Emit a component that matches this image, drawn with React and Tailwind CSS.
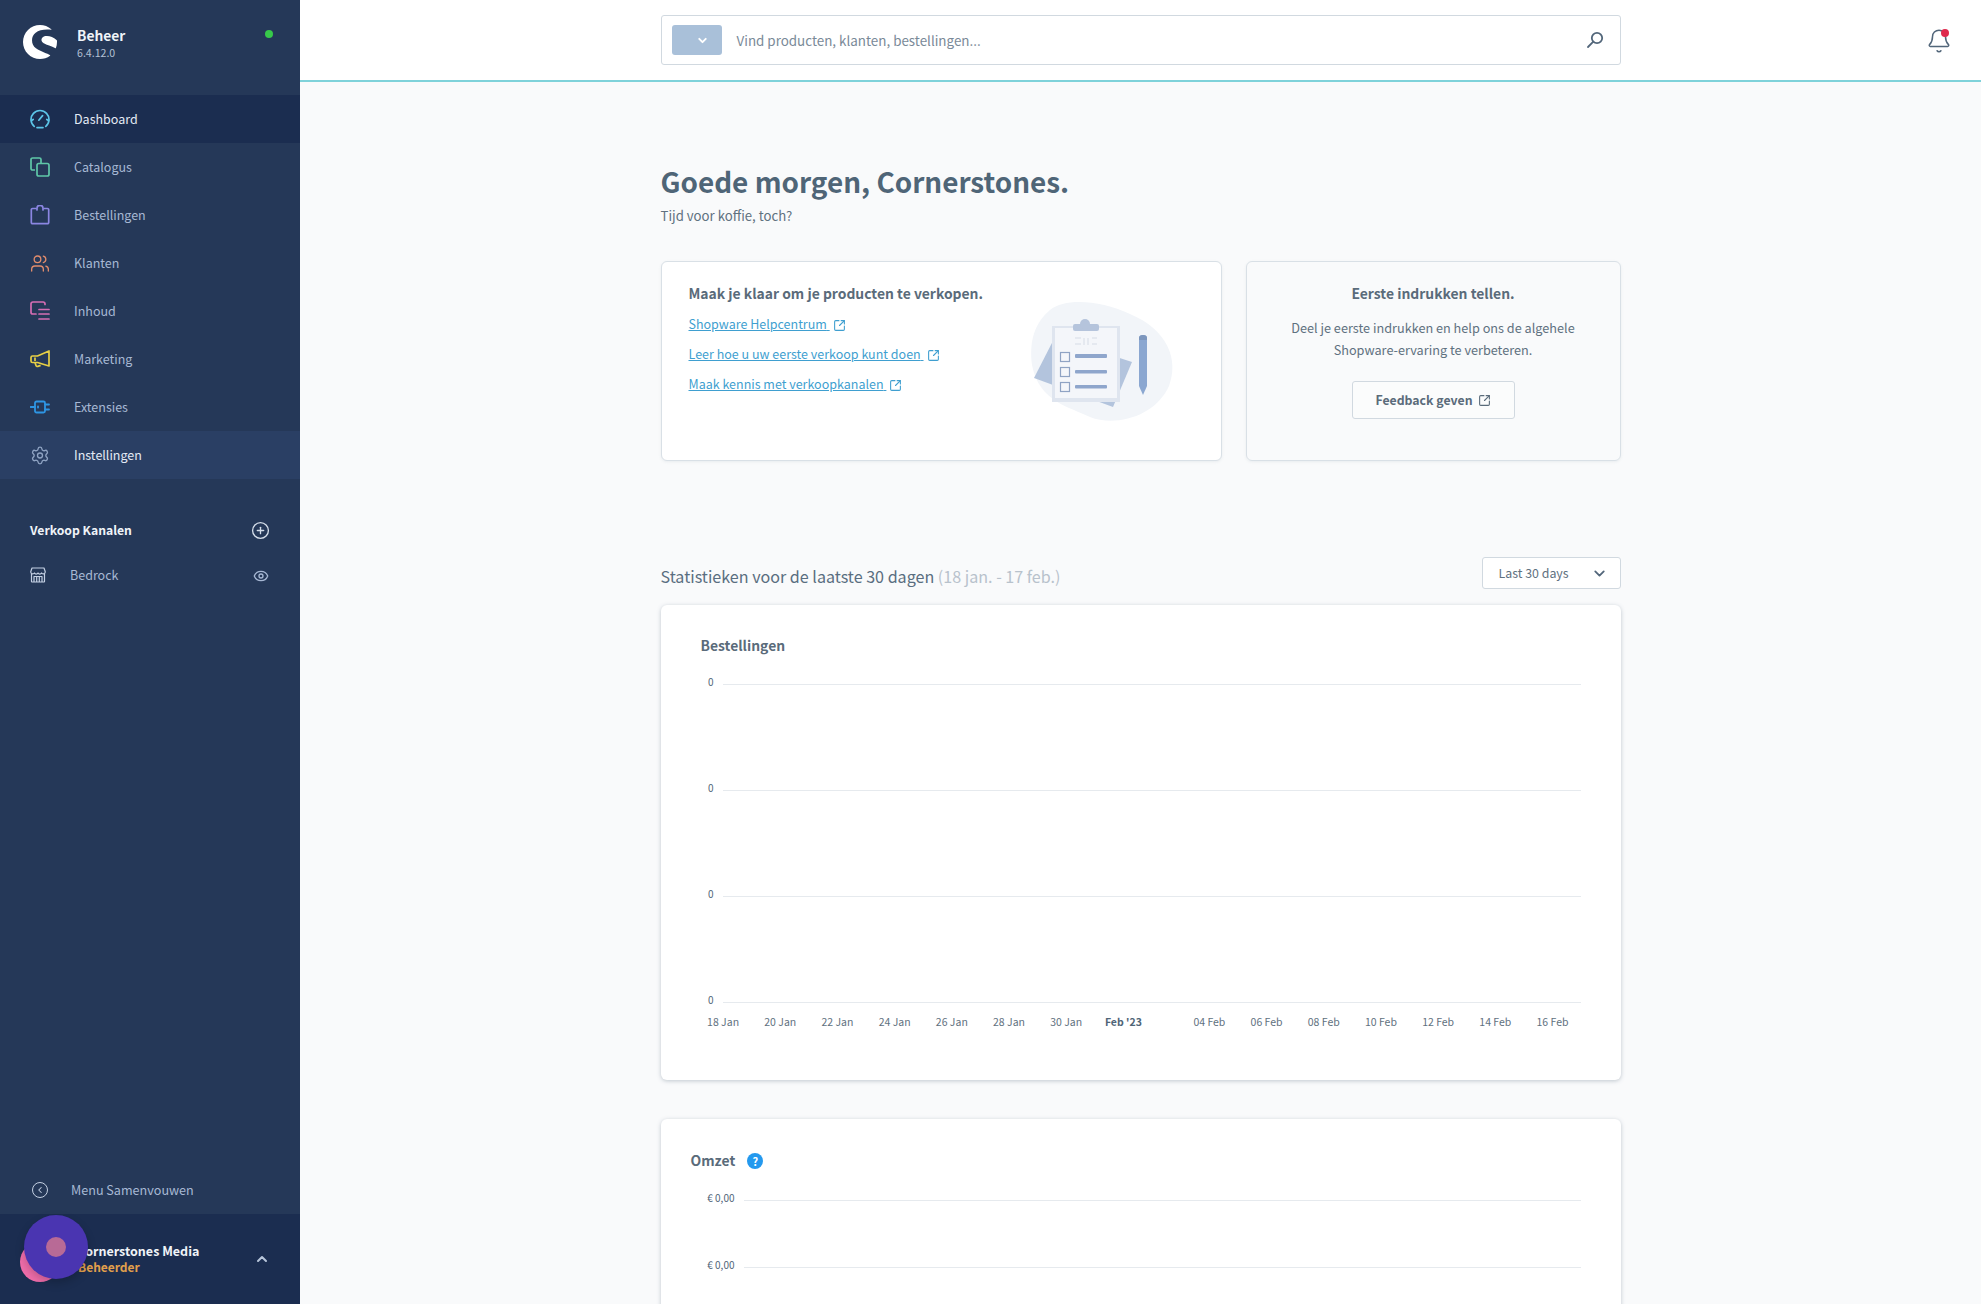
import React from 'react'
import { SiShopware } from 'react-icons/si'
import { Bell, ChevronDown, ChevronLeft, ChevronUp, CirclePlus, Eye, Settings, SquareArrowOutUpRight, Users } from 'lucide-react'

const GaugeIcon = () => (
  <svg viewBox="0 0 20 20" className="w-5 h-5" fill="none" stroke="#5cc5e8" strokeWidth="1.7" strokeLinecap="round">
    <path d="M4.200 17.400A9 9 0 1 1 15.800 17.400" />
    <path d="M7 18.600h6" />
    <path d="M8.800 11.200 12.600 6.600" />
    <path d="M1.600 11.500l1.600-1M18.400 11.500l-1.600-1" />
  </svg>
)

const CatalogIcon = () => (
  <svg viewBox="0 0 20 20" className="w-5 h-5" fill="none" stroke="#5fc7a8" strokeWidth="1.7">
    <path d="M5 13H2.600A1.600 1.600 0 0 1 1 11.400V2.600A1.600 1.600 0 0 1 2.600 1h6.800A1.600 1.600 0 0 1 11 2.600V6" />
    <rect x="7" y="6.500" width="12" height="12.500" rx="1.800" />
  </svg>
)

const BagIcon = () => (
  <svg viewBox="0 0 20 20" className="w-5 h-5" fill="none" stroke="#8b86e2" strokeWidth="1.7" strokeLinecap="round">
    <path d="M6 3.500H2.500A1.200 1.200 0 0 0 1.300 4.700V17.500A1.200 1.200 0 0 0 2.500 18.700H17.500A1.200 1.200 0 0 0 18.700 17.500V4.700A1.200 1.200 0 0 0 17.500 3.500H14" />
    <path d="M7 5V3.300a3 3 0 0 1 6 0V5" />
  </svg>
)

const ContentIcon = () => (
  <svg viewBox="0 0 20 20" className="w-5 h-5" fill="none" stroke="#d56db3" strokeWidth="1.7" strokeLinecap="round">
    <path d="M15 3.500V2.800A1.800 1.800 0 0 0 13.200 1H2.800A1.800 1.800 0 0 0 1 2.800V11.200A1.800 1.800 0 0 0 2.800 13H6" />
    <path d="M9 8.500h10M9 13h10M9 18h10" />
  </svg>
)

const MarketingIcon = () => (
  <svg viewBox="0 0 20 20" className="w-5 h-5" fill="none" stroke="#e7cf45" strokeWidth="1.700" strokeLinejoin="round">
    <path d="M19 2v15L7.500 13.500H2.500A1.500 1.500 0 0 1 1 12V8.500A1.500 1.500 0 0 1 2.500 7H7.500z" />
    <path d="M5 13.500l1 3a1.400 1.400 0 0 0 1.800.900l2.800-1" />
    <path d="M5 8.500v3.500" />
  </svg>
)

const ExtensionIcon = () => (
  <svg viewBox="0 0 20 20" className="w-5 h-5" fill="none" stroke="#2e95e3" strokeWidth="1.800" strokeLinecap="round">
    <rect x="5" y="4.500" width="10" height="11" rx="1.500" />
    <path d="M0.500 10H5M15 7.500h4M15 12.500h4" />
    <path d="M8 9.500v1" />
  </svg>
)

const StoreIcon = () => (
  <svg viewBox="0 0 16 16" className="w-4 h-4" fill="none" stroke="#c4d0e3" strokeWidth="1.200" strokeLinejoin="round">
    <path d="M1.500 6.500V14.500A.500.500 0 0 0 2 15H14A.500.500 0 0 0 14.500 14.500V6.500" />
    <path d="M2 1H14L15.200 4.500A2 2 0 0 1 11.600 6 2 2 0 0 1 8 6 2 2 0 0 1 4.400 6 2 2 0 0 1 .800 4.500z" />
    <path d="M4 15V9.500H12V15M6.700 9.500V15M9.300 9.500V15" />
  </svg>
)

const SearchGlass = () => (
  <svg viewBox="0 0 18 18" className="w-[18px] h-[18px] ml-auto" fill="none" stroke="#52667a" strokeWidth="1.800" strokeLinecap="round">
    <circle cx="11" cy="7" r="5.200" />
    <path d="M7.300 10.700 2 16" />
  </svg>
)

const NavItem = ({ icon, label, variant }) => {
  const rowClass =
    variant === 'active'
      ? 'bg-[#1b2d50] text-[#e3eaf4]'
      : variant === 'hover'
        ? 'bg-[#2a3f64] text-[#e3eaf4]'
        : 'text-[#a7b8d4]'
  return (
    <div className={`h-12 flex items-center pl-[30px] ${rowClass}`}>
      <span className="w-5 h-5 flex items-center justify-center">{icon}</span>
      <span className="ml-6 text-[12.5px] leading-5">{label}</span>
    </div>
  )
}

const HelpLink = ({ children }) => (
  <a className="flex items-center gap-[3px] h-[30px] text-[12.5px] leading-5 text-[#3f9fd0]">
    <span className="underline whitespace-pre">{children} </span>
    <SquareArrowOutUpRight size={13} strokeWidth={2} className="mt-[2px]" />
  </a>
)

const Clipboard = () => (
  <svg viewBox="0 0 200 140" className="w-[200px] h-[140px] shrink-0">
    <path d="M50 20C65 8 100 10 130 24C168 40 179 70 169 96C155 127 115 137 90 127C70 117 39 112 32 75C29 50 35 33 50 20Z" fill="#f2f5f9" />
    <polygon points="55,47 132,72 113,117 34,88" fill="#b3c4dd" />
    <rect x="52" y="36" width="68" height="76" fill="#dfe5ef" />
    <rect x="55" y="38" width="62" height="70" fill="#f4f6fa" />
    <rect x="73" y="34" width="26" height="7" rx="2" fill="#b5c4dc" />
    <circle cx="85" cy="34" r="5" fill="#b5c4dc" />
    <g fill="none" stroke="#e0e5ed" strokeWidth="1.500">
      <path d="M75 48h6M75 54h6M84 48v7M88 48v7M92 48h5M92 54h5" />
    </g>
    <g fill="none" stroke="#8fa3c4" strokeWidth="1.200">
      <rect x="60.500" y="62.500" width="9" height="9" />
      <rect x="60.500" y="77.500" width="9" height="9" />
      <rect x="60.500" y="92.500" width="9" height="9" />
    </g>
    <g fill="#8fa6cc">
      <rect x="75" y="64" width="32" height="4" rx="1" />
      <rect x="75" y="80" width="32" height="3.500" rx="1" />
      <rect x="75" y="95" width="32" height="3.500" rx="1" />
    </g>
    <path d="M139 48A4 3 0 0 1 147 48V96L143 105 139 96Z" fill="#8ba7d1" />
    <path d="M139 48A4 3 0 0 1 147 48V50H139Z" fill="#7d96bd" />
  </svg>
)

const xLabels = ['18 Jan', '20 Jan', '22 Jan', '24 Jan', '26 Jan', '28 Jan', '30 Jan', "Feb '23", '', '04 Feb', '06 Feb', '08 Feb', '10 Feb', '12 Feb', '14 Feb', '16 Feb']

const ChartRow = ({ label, height, labelWidth }) => (
  <div className={`flex items-start ${height}`}>
    <span className={`${labelWidth} shrink-0 text-right text-[10px] leading-[14px] text-[#52667a]`}>{label}</span>
    <span className="ml-[9px] flex-1 h-px mt-[9px] bg-[#e6eaee]" />
  </div>
)

export default function App() {
  return (
    <div className="flex h-[1304px] overflow-hidden bg-[#f9fafb] font-['Noto_Sans_CJK_SC',sans-serif] text-[#52667a]">
      {/* sidebar */}
      <aside className="relative w-[300px] shrink-0 h-full flex flex-col bg-[#253858]">
        <div className="h-[95px] flex items-start pl-[23px] pr-[27px] pt-[25px] shrink-0">
          <SiShopware size={34} color="#ffffff" />
          <div className="ml-[20px] flex-1">
            <div className="text-[13.8px] leading-[20px] font-semibold text-[#f0f4f8]">Beheer</div>
            <div className="mt-px text-[10.6px] leading-[14px] text-[#b3c0d4]">6.4.12.0</div>
          </div>
          <span className="w-2 h-2 mt-[5px] rounded-full bg-[#37c94a]" />
        </div>

        <nav>
          <NavItem icon={<GaugeIcon />} label="Dashboard" variant="active" />
          <NavItem icon={<CatalogIcon />} label="Catalogus" />
          <NavItem icon={<BagIcon />} label="Bestellingen" />
          <NavItem icon={<Users size={23} color="#e08c6c" strokeWidth={1.6} />} label="Klanten" />
          <NavItem icon={<ContentIcon />} label="Inhoud" />
          <NavItem icon={<MarketingIcon />} label="Marketing" />
          <NavItem icon={<ExtensionIcon />} label="Extensies" />
          <NavItem icon={<Settings size={23} color="#8ea2c2" strokeWidth={1.6} />} label="Instellingen" variant="hover" />
        </nav>

        <div className="mt-[41px] pl-[30px] pr-[30px] h-5 flex items-center justify-between">
          <span className="text-[12.2px] leading-5 font-semibold text-[#f0f4f8]">Verkoop Kanalen</span>
          <CirclePlus size={19} color="#d5deea" strokeWidth={1.700} />
        </div>
        <div className="mt-[25px] pl-[30px] pr-[30px] h-5 flex items-center">
          <StoreIcon />
          <span className="ml-6 text-[12.5px] leading-5 text-[#a7b8d4]">Bedrock</span>
          <Eye size={16} color="#a7b8d4" strokeWidth={2} className="ml-auto mr-[1px] mt-[2px]" />
        </div>

        <div className="mt-auto h-12 pl-8 flex items-center text-[#a7b8d4]">
          <span className="w-4 h-4 rounded-full border-[1.5px] border-[#c4d0e3] flex items-center justify-center">
            <ChevronLeft size={10} color="#c4d0e3" strokeWidth={2.500} />
          </span>
          <span className="ml-[23px] text-[12.6px] leading-5">Menu Samenvouwen</span>
        </div>

        <div className="h-[90px] shrink-0 bg-[#1b2d50] pl-5 pr-[30px] flex items-center">
          <span className="w-10 h-10 mt-[6px] rounded-full bg-[#f06dab] shrink-0" />
          <div className="ml-[17px] flex-1 mt-[-2px]">
            <div className="text-[12.5px] leading-[17px] font-semibold text-[#f0f4f8]">Cornerstones Media</div>
            <div className="ml-px text-[12px] leading-[16px] font-semibold text-[#e2a04c]">Beheerder</div>
          </div>
          <ChevronUp size={16} color="#b7c5da" strokeWidth={3} />
        </div>

        {/* floating widget */}
        <div className="absolute left-6 bottom-[25px] w-16 h-16 rounded-full bg-[#4a35b1] shadow-[0_4px_10px_rgba(0,0,0,0.2)] flex items-center justify-center">
          <span className="w-5 h-5 rounded-full bg-[#b86a96]" />
        </div>
      </aside>

      <div className="flex-1 min-w-0 flex flex-col">
        {/* top bar */}
        <header className="h-[82px] shrink-0 bg-white border-b-2 border-[#7fd2da] relative flex justify-center">
          <div className="w-[960px] h-[50px] mt-[15px] bg-white border border-[#d1d9e0] rounded-[3px] flex items-center pl-[11px] pr-[16px]">
            <span className="w-[50px] h-[30px] rounded-[3px] bg-[#a9c0d9] flex items-center justify-center ml-[-1px]">
              <ChevronDown size={13} color="#ffffff" strokeWidth={3.500} className="ml-[12px]" />
            </span>
            <span className="ml-[15px] text-[13.4px] leading-5 text-[#7a8a98]">Vind producten, klanten, bestellingen...</span>
            <SearchGlass />
          </div>
          <div className="absolute right-[29px] top-[28px] w-[26px] h-[26px]">
            <Bell size={26} color="#52667a" strokeWidth={1.400} />
            <span className="absolute right-[3px] top-[1px] w-2 h-2 rounded-full bg-[#de294c]" />
          </div>
        </header>

        {/* content */}
        <main className="w-[960px] mx-auto flex-1 min-h-0">
          <h1 className="mt-[77px] text-[27.9px] leading-[44px] font-semibold text-[#4f6577]">Goede morgen, Cornerstones.</h1>
          <p className="mt-[3px] text-[13.2px] leading-5 text-[#5f7180]">Tijd voor koffie, toch?</p>

          <div className="mt-[35px] flex gap-6">
            <div className="w-[561px] h-[200px] bg-white border border-[#d9e0e6] rounded-md shadow-[0_1px_3px_rgba(120,138,155,0.12)] flex justify-between pl-[27px] pr-[21px]">
              <div className="pt-[21px]">
                <h3 className="text-[13.9px] leading-5 font-semibold text-[#5a6b7a] whitespace-nowrap">Maak je klaar om je producten te verkopen.</h3>
                <div className="mt-[6px]">
                  <HelpLink>Shopware Helpcentrum</HelpLink>
                  <HelpLink>Leer hoe u uw eerste verkoop kunt doen</HelpLink>
                  <HelpLink>Maak kennis met verkoopkanalen</HelpLink>
                </div>
              </div>
              <div className="mt-[28px]">
                <Clipboard />
              </div>
            </div>

            <div className="flex-1 h-[200px] border border-[#d9e0e6] rounded-md shadow-[0_1px_3px_rgba(120,138,155,0.12)] flex flex-col items-center pt-[21px]">
              <h3 className="text-[13.9px] leading-5 font-semibold text-[#5a6b7a]">Eerste indrukken tellen.</h3>
              <p className="mt-[14px] text-[12.7px] leading-[22px] text-center text-[#5f7180]">
                Deel je eerste indrukken en help ons de algehele
                <br />
                Shopware-ervaring te verbeteren.
              </p>
              <button className="mt-[20px] w-[163px] h-[38px] bg-white/40 border border-[#d1d9e0] rounded-[3px] flex items-center justify-center gap-[5px] text-[12.3px] leading-5 font-semibold text-[#5a6b7a]">
                Feedback geven
                <SquareArrowOutUpRight size={13} strokeWidth={2} />
              </button>
            </div>
          </div>

          <div className="mt-[96px] flex items-center justify-between h-[32px]">
            <h2 className="text-[16.1px] leading-6 mt-[6px] text-[#5a6e80]">
              Statistieken voor de laatste 30 dagen <span className="text-[#b8c2cc]">(18 jan. - 17 feb.)</span>
            </h2>
            <div className="w-[139px] h-[32px] bg-white border border-[#d1d9e0] rounded-[3px] flex items-center justify-between pl-4 pr-[12px]">
              <span className="text-[12.4px] leading-5 text-[#5f7180]">Last 30 days</span>
              <ChevronDown size={17} color="#52667a" strokeWidth={2.500} />
            </div>
          </div>

          <section className="mt-4 h-[475px] bg-white rounded-md shadow-[0_1px_4px_rgba(82,102,122,0.35)] pl-10 pr-10 pt-[29px]">
            <h3 className="text-[13.9px] leading-[22px] font-semibold text-[#5a6b7a]">Bestellingen</h3>
            <div className="mt-[19px]">
              <ChartRow label="0" height="h-[106px]" labelWidth="w-[13px]" />
              <ChartRow label="0" height="h-[106px]" labelWidth="w-[13px]" />
              <ChartRow label="0" height="h-[106px]" labelWidth="w-[13px]" />
              <ChartRow label="0" height="h-[18px]" labelWidth="w-[13px]" />
            </div>
            <div className="flex -ml-[6px] mt-[4px]">
              {xLabels.map((label, i) => (
                <span
                  key={i}
                  className={`shrink-0 text-center text-[10.5px] leading-[14px] whitespace-nowrap ${label === '' ? 'w-[28.8px]' : 'w-[57.2px]'} ${label === "Feb '23" ? 'font-bold text-[#4f6577]' : 'text-[#5f7180]'}`}
                >
                  {label}
                </span>
              ))}
            </div>
          </section>

          <section className="mt-[39px] h-[300px] bg-white rounded-md shadow-[0_1px_4px_rgba(82,102,122,0.35)] pl-[30px] pr-10 pt-[30px]">
            <div className="flex items-center gap-[12px]">
              <h3 className="text-[13.9px] leading-[22px] font-semibold text-[#5a6b7a]">Omzet</h3>
              <span className="w-4 h-4 mt-[1px] rounded-full bg-[#2499ee] text-white text-[11px] leading-4 font-bold text-center">?</span>
            </div>
            <div className="mt-[20px] pl-[12px]">
              <ChartRow label="€ 0,00" height="h-[67px]" labelWidth="w-[32px]" />
              <ChartRow label="€ 0,00" height="h-[67px]" labelWidth="w-[32px]" />
            </div>
          </section>
        </main>
      </div>
    </div>
  )
}
